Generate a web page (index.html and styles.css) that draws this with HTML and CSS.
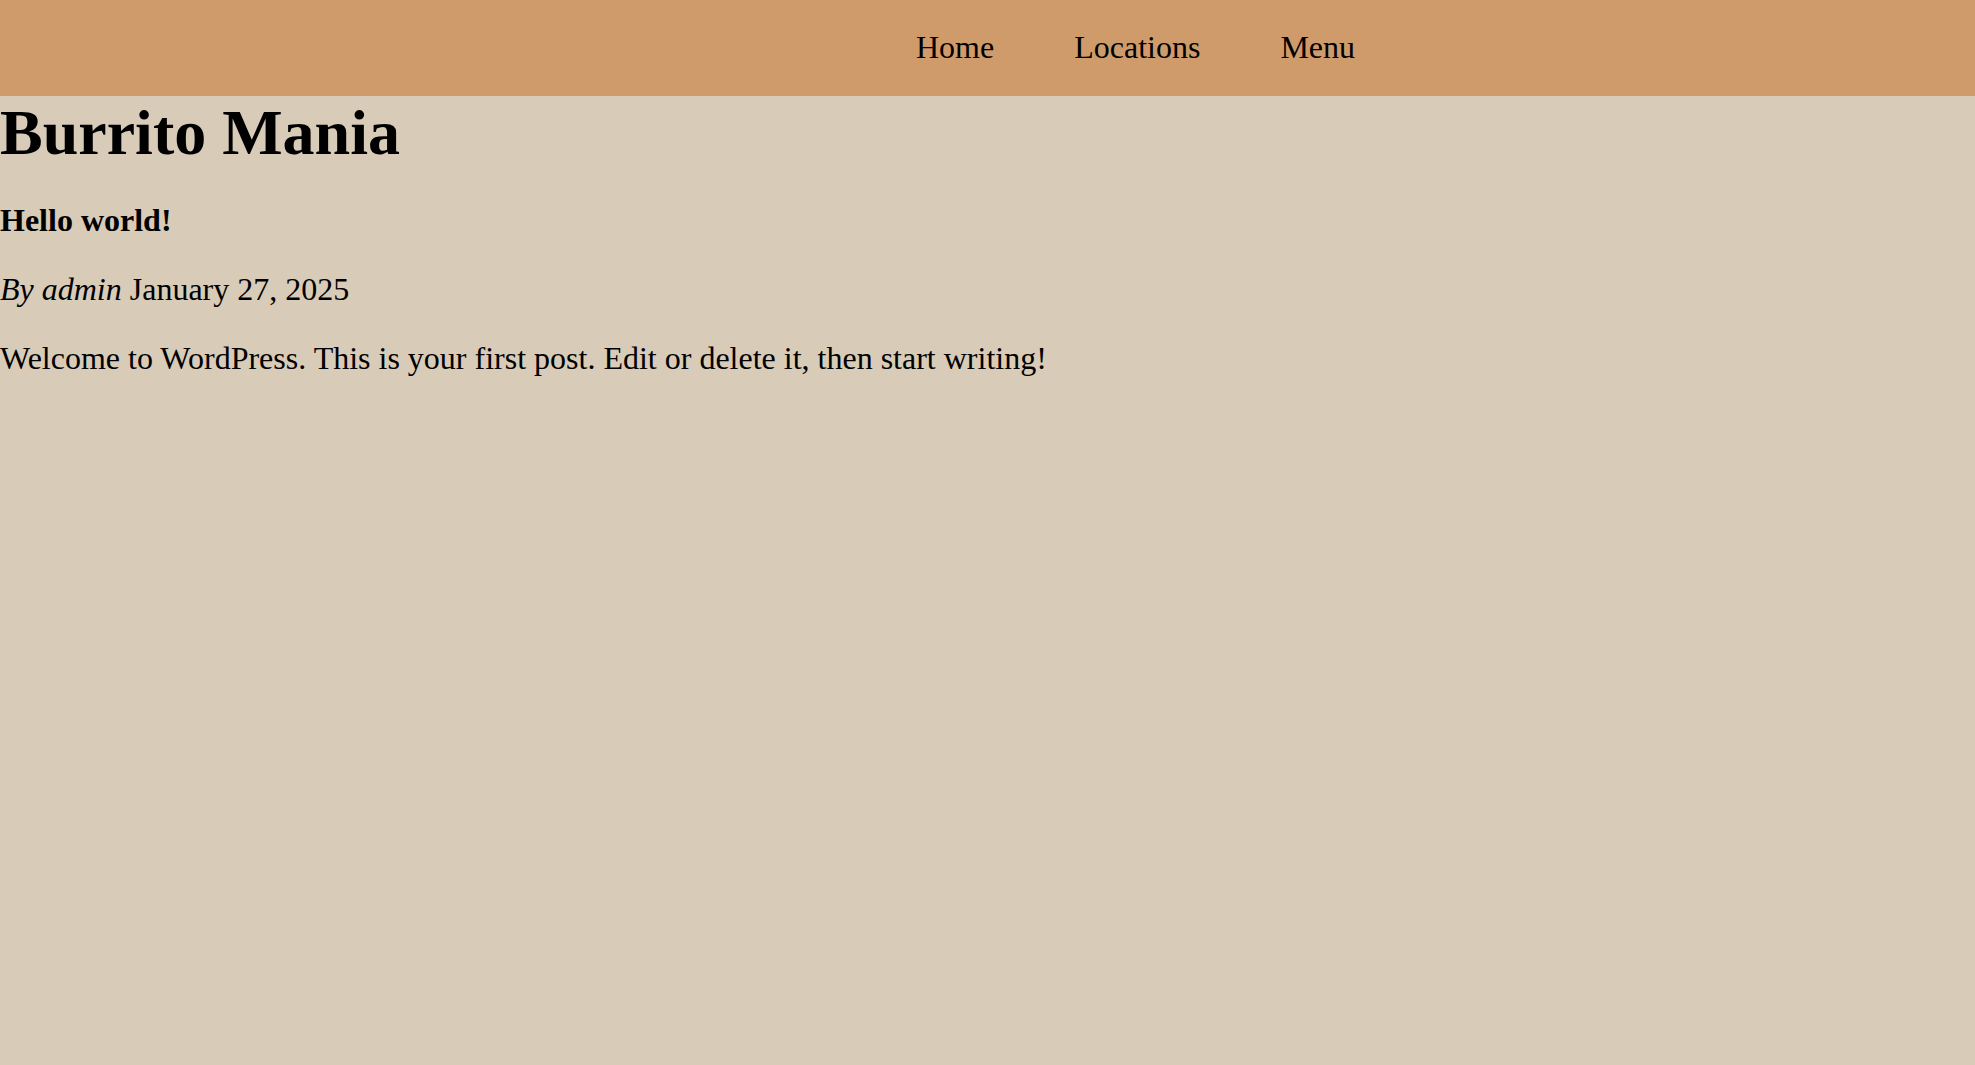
FILE: index.html
```html
<!DOCTYPE html>
<html lang="en">
<head>
<meta charset="utf-8">
<title>Burrito Mania</title>
<link rel="stylesheet" href="styles.css">
</head>
<body>
<header class="site-header">
  <nav class="main-nav">
    <a class="nav-link" href="#">Home</a>
    <a class="nav-link" href="#">Locations</a>
    <a class="nav-link" href="#">Menu</a>
  </nav>
</header>
<main class="content">
  <h1 class="site-title">Burrito Mania</h1>
  <article class="post">
    <h2 class="post-title">Hello world!</h2>
    <p class="post-meta"><em>By admin</em> January 27, 2025</p>
    <p class="post-body">Welcome to WordPress. This is your first post. Edit or delete it, then start writing!</p>
  </article>
</main>
</body>
</html>
```
FILE: styles.css
```css
html, body {
  margin: 0;
  padding: 0;
}
body {
  background: #d8cbb8;
  color: #000;
  font-family: "Liberation Serif", "Times New Roman", serif;
  font-size: 32px;
  min-height: 1065px;
}
.site-header {
  background: #d09b6a;
  height: 96px;
  display: flex;
  align-items: center;
  padding-left: 876px;
  padding-bottom: 2px;
  box-sizing: border-box;
}
.main-nav {
  display: flex;
}
.nav-link {
  color: #000;
  text-decoration: none;
  font-size: 32px;
  padding: 0 40px;
}
.site-title {
  font-size: 64px;
  margin: 0;
}
.post-title {
  font-size: 32px;
  margin: 32px 0;
}
.post-meta,
.post-body {
  margin: 32px 0;
}
```
